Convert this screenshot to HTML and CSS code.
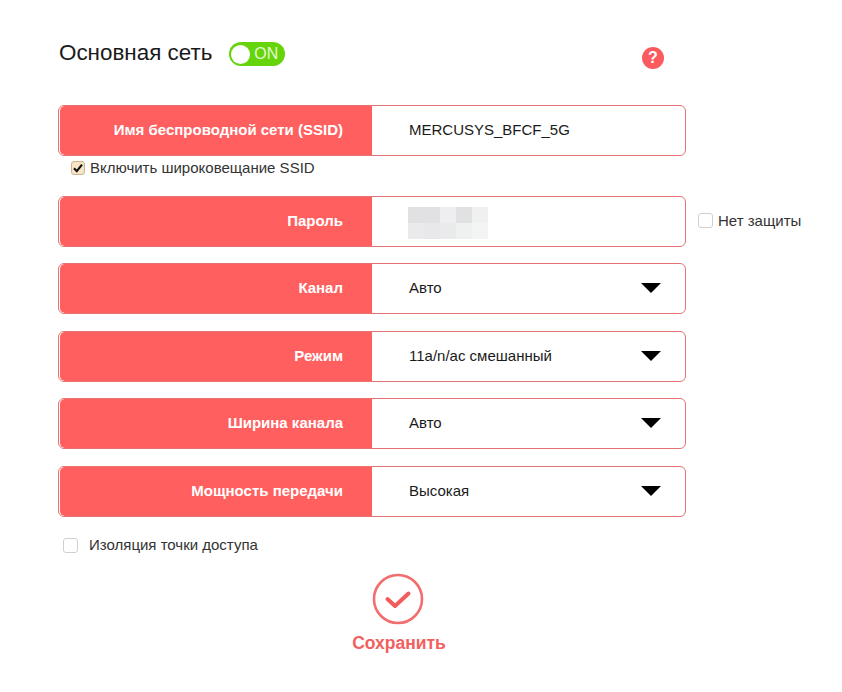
FILE: index.html
```html
<!DOCTYPE html>
<html lang="ru">
<head>
<meta charset="utf-8">
<title>Основная сеть</title>
<link rel="stylesheet" href="styles.css">
</head>
<body>
<main class="page">
  <header class="head">
    <h1 class="title">Основная сеть</h1>
    <div class="switch"><span class="knob"></span><span class="on">ON</span></div>
    <div class="help">?</div>
  </header>

  <div class="row row-ssid">
    <div class="label">Имя беспроводной сети (SSID)</div>
    <div class="value">MERCUSYS_BFCF_5G</div>
  </div>
  <label class="check check-ssid"><span class="box checked"><svg viewBox="0 0 14 14" width="14" height="14"><path d="M3 7.2 L5.8 10.2 L11 3.6" fill="none" stroke="#111" stroke-width="2.1"/></svg></span>Включить широковещание SSID</label>

  <div class="pass-line">
    <div class="row">
      <div class="label">Пароль</div>
      <div class="value">
        <div class="mosaic">
          <i class="m1"></i><i class="m1"></i><i class="m2"></i><i class="m1"></i><i class="m3"></i>
          <i class="m5"></i><i class="m6"></i><i class="m5"></i><i class="m3"></i><i class="m4"></i>
        </div>
      </div>
    </div>
    <label class="check check-open"><span class="box"></span>Нет защиты</label>
  </div>

  <div class="row row-sel">
    <div class="label">Канал</div>
    <div class="value">Авто<span class="arrow"></span></div>
  </div>
  <div class="row row-sel">
    <div class="label">Режим</div>
    <div class="value">11a/n/ac смешанный<span class="arrow"></span></div>
  </div>
  <div class="row row-sel">
    <div class="label">Ширина канала</div>
    <div class="value">Авто<span class="arrow"></span></div>
  </div>
  <div class="row row-sel">
    <div class="label">Мощность передачи</div>
    <div class="value">Высокая<span class="arrow"></span></div>
  </div>

  <label class="check check-iso"><span class="box"></span>Изоляция точки доступа</label>

  <div class="save">
    <svg class="save-icon" viewBox="0 0 52 52" width="52" height="52"><circle cx="26" cy="26" r="24" fill="none" stroke="#f26d6d" stroke-width="2.6"/><path d="M15.5 26 L23 33 L36.5 20.5" fill="none" stroke="#f25c5c" stroke-width="4" stroke-linecap="round" stroke-linejoin="round"/></svg>
    <div class="save-text">Сохранить</div>
  </div>
</main>
</body>
</html>
```
FILE: styles.css
```css
* { box-sizing: border-box; }
html, body { margin: 0; background: #fff; }
body { font-family: "Liberation Sans", Arial, sans-serif; color: #1a1a1a; width: 842px; height: 692px; overflow: hidden; }
.page { padding: 40px 0 0 58px; display: flex; flex-direction: column; align-items: flex-start; }
.head { display: flex; align-items: center; width: 628px; height: 26px; position: relative; margin-bottom: 39px; }
.title { margin: 0 0 0 1px; font-size: 22.4px; font-weight: 400; line-height: 26px; color: #1a1a1a; }
.switch { margin-left: 17px; margin-top: 2px; width: 56px; height: 24px; border-radius: 12px; background: #66d40a; display: flex; align-items: center; padding-left: 2px; }
.knob { width: 19px; height: 19px; border-radius: 50%; background: #fff; flex: none; }
.on { margin-left: 4px; color: #e4f8d2; font-size: 16px; line-height: 18px; }
.help { position: absolute; left: 584px; top: 7px; width: 22px; height: 22px; border-radius: 50%; background: #fb5a5f; color: #fff; font-size: 16px; font-weight: 700; line-height: 22px; text-align: center; }
.row { display: flex; width: 628px; height: 51px; border: 1px solid #e57373; border-radius: 6px; overflow: hidden; background: #fff; flex: none; }
.label { width: 312px; background: #ff5f5f; color: #fff; font-weight: 700; font-size: 15px; line-height: 48px; text-align: right; padding-right: 29px; margin-left: 1px; border-radius: 5px 0 0 5px; flex: none; }
.value { flex: 1; position: relative; padding-left: 37px; font-size: 15px; line-height: 48px; color: #1a1a1a; }
.row-sel { margin-bottom: 16.6px; }
.check { display: flex; align-items: center; font-size: 15px; line-height: 16px; color: #333; }
.box { width: 15px; height: 15px; border: 1px solid #cfcfcf; border-radius: 3px; background: #fff; display: block; flex: none; }
.box.checked { width: 14px; height: 14px; background: #f7e6c6; border-color: #c9b48f; }
.box svg { display: block; margin: -1px; }
.check-ssid { margin: 4px 0 20px 13px; gap: 5px; }
.pass-line { display: flex; align-items: center; margin-bottom: 16px; }
.check-open { margin: -2px 0 0 12px; gap: 5px; white-space: nowrap; }
.mosaic { position: absolute; left: 36px; top: 10px; display: grid; grid-template-columns: repeat(5, 16px); grid-auto-rows: 16px; }
.mosaic i { display: block; }
.m1 { background: #e1e1e3; }
.m2 { background: #eeeef0; }
.m3 { background: #eff0f0; }
.m4 { background: #f3f4f4; }
.m5 { background: #e9eaeb; }
.m6 { background: #e8e8ea; }
.arrow { position: absolute; right: 24px; top: 19px; width: 0; height: 0; border-left: 10px solid transparent; border-right: 10px solid transparent; border-top: 10px solid #000; }
.check-iso { margin: 4px 0 0 5px; gap: 11px; }
.save { align-self: stretch; width: 628px; margin-top: 20px; display: flex; flex-direction: column; align-items: center; }
.save-icon { display: block; margin-left: 52px; }
.save-text { margin-top: 8px; margin-left: 54px; color: #f25f5f; font-size: 17.5px; font-weight: 700; line-height: 20px; }
```
